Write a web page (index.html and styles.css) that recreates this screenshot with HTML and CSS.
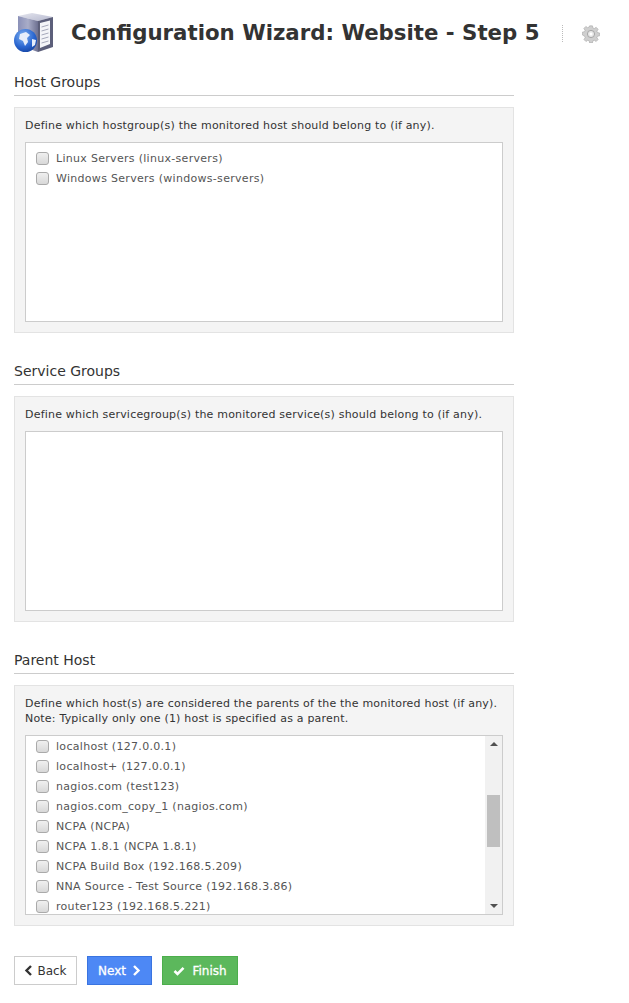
FILE: index.html
```html
<!DOCTYPE html>
<html lang="en">
<head>
<meta charset="utf-8">
<title>Configuration Wizard: Website - Step 5</title>
<link rel="stylesheet" href="styles.css">
</head>
<body>
<main class="page">
  <header class="head">
    <svg class="logo" width="40" height="41" viewBox="0 0 40 41" aria-hidden="true">
      <defs>
        <linearGradient id="srv" x1="0" y1="0" x2="1" y2="0"><stop offset="0" stop-color="#8a90b8"/><stop offset=".5" stop-color="#a9adc8"/><stop offset="1" stop-color="#6d7090"/></linearGradient>
        <linearGradient id="top" x1="0" y1="0" x2="1" y2="1"><stop offset="0" stop-color="#e4e5ee"/><stop offset="1" stop-color="#b6b9cf"/></linearGradient>
        <radialGradient id="glb" cx=".4" cy=".3" r=".8"><stop offset="0" stop-color="#7fb2f2"/><stop offset=".6" stop-color="#2a66d0"/><stop offset="1" stop-color="#123f9c"/></radialGradient>
      </defs>
      <path d="M4 3 L18 0 L39 4 L24 8Z" fill="url(#top)"/>
      <path d="M4 3 L24 8 V39 L4 32Z" fill="url(#srv)"/>
      <path d="M24 8 L39 4 V34 L24 39Z" fill="#5c5f7a"/>
      <path d="M26 10 L36 7.500 V31 L26 35Z" fill="#f4f5f8"/>
      <path d="M27.500 14 L34.500 12 M27.500 18 L34.500 16 M27.500 22 L34.500 20 M27.500 26 L34.500 24 M27.500 30 L34.500 28" stroke="#a5a8ba" stroke-width="1"/>
      <circle cx="11.500" cy="27.500" r="11.500" fill="url(#glb)"/>
      <path d="M6 21 L12 19 L16 22 L13 25 L14 29 L11 33 L9 28 L5 26Z M18 26 L22 27 L21 32 L18 34Z" fill="#e6eefb"/>
    </svg>
    <h1 class="title">Configuration Wizard: Website - Step 5</h1>
    <span class="divider"></span>
    <svg class="gear" width="18" height="18" viewBox="0 0 18 18" aria-hidden="true">
      <path d="M7.500 1h3l.4 2.200 1.500.6 1.900-1.300 2.100 2.100-1.300 1.900.6 1.500 2.200.4v3l-2.200.4-.6 1.500 1.300 1.900-2.100 2.100-1.900-1.300-1.500.6-.4 2.200h-3l-.4-2.200-1.500-.6-1.900 1.300-2.100-2.100 1.300-1.900-.6-1.500L0 10.500v-3l2.200-.4.6-1.500L1.500 3.700l2.100-2.100 1.900 1.300 1.500-.6z" fill="#cfcfcf" stroke="#a5a5a5" stroke-width=".6" transform="translate(.4 -.1) scale(.96)"/>
      <circle cx="9" cy="9" r="3.600" fill="#e6e6e6" stroke="#999" stroke-width=".8"/>
      <circle cx="9" cy="9" r="1.500" fill="#fff"/>
    </svg>
  </header>

  <section class="section">
    <h2 class="section-title">Host Groups</h2>
    <div class="well">
      <p class="desc">Define which hostgroup(s) the monitored host should belong to (if any).</p>
      <div class="list list-tall">
        <label class="row"><input type="checkbox" class="check">Linux Servers (linux-servers)</label>
        <label class="row"><input type="checkbox" class="check">Windows Servers (windows-servers)</label>
      </div>
    </div>
  </section>

  <section class="section">
    <h2 class="section-title">Service Groups</h2>
    <div class="well">
      <p class="desc">Define which servicegroup(s) the monitored service(s) should belong to (if any).</p>
      <div class="list list-tall"></div>
    </div>
  </section>

  <section class="section">
    <h2 class="section-title">Parent Host</h2>
    <div class="well">
      <p class="desc desc-two">Define which host(s) are considered the parents of the the monitored host (if any).<br>Note: Typically only one (1) host is specified as a parent.</p>
      <div class="list list-scroll">
        <div class="rows">
          <label class="row"><input type="checkbox" class="check">localhost (127.0.0.1)</label>
          <label class="row"><input type="checkbox" class="check">localhost+ (127.0.0.1)</label>
          <label class="row"><input type="checkbox" class="check">nagios.com (test123)</label>
          <label class="row"><input type="checkbox" class="check">nagios.com_copy_1 (nagios.com)</label>
          <label class="row"><input type="checkbox" class="check">NCPA (NCPA)</label>
          <label class="row"><input type="checkbox" class="check">NCPA 1.8.1 (NCPA 1.8.1)</label>
          <label class="row"><input type="checkbox" class="check">NCPA Build Box (192.168.5.209)</label>
          <label class="row"><input type="checkbox" class="check">NNA Source - Test Source (192.168.3.86)</label>
          <label class="row"><input type="checkbox" class="check">router123 (192.168.5.221)</label>
        </div>
        <div class="scrollbar">
          <span class="arrow-up"></span>
          <span class="thumb"></span>
          <span class="arrow-down"></span>
        </div>
      </div>
    </div>
  </section>

  <nav class="actions">
    <button class="btn btn-back" type="button">
      <svg width="9" height="11" viewBox="0 0 9 11" aria-hidden="true"><path d="M7 1 L2.500 5.500 L7 10" fill="none" stroke="currentColor" stroke-width="2.400"/></svg>Back</button>
    <button class="btn btn-next" type="button">Next<svg width="9" height="11" viewBox="0 0 9 11" aria-hidden="true"><path d="M2 1 L6.500 5.500 L2 10" fill="none" stroke="currentColor" stroke-width="2.400"/></svg></button>
    <button class="btn btn-finish" type="button"><svg width="12" height="10" viewBox="0 0 12 10" aria-hidden="true"><path d="M1.500 5 L4.500 8 L10.500 1.800" fill="none" stroke="currentColor" stroke-width="2.600"/></svg>Finish</button>
  </nav>
</main>
</body>
</html>
```
FILE: styles.css
```css
* { box-sizing: border-box; }
html, body { margin: 0; padding: 0; background: #fff; }
body {
  font-family: "DejaVu Sans", Verdana, sans-serif;
  font-size: 11px;
  color: #333;
}
.page { width: 629px; height: 1003px; padding: 0 0 0 14px; overflow: hidden; }

.head { display: flex; align-items: center; height: 64px; width: 600px; }
.logo { flex: none; margin: 3px 17px 0 0; }
.title { margin: 2px 0 0; font-size: 21.3px; font-weight: 700; line-height: 28px; color: #333; white-space: nowrap; }
.divider { flex: none; width: 0; height: 17px; border-left: 1px dotted #bbb; margin: 3px 19px 0 22px; }
.gear { flex: none; margin-top: 3px; }

.section { width: 500px; margin-bottom: 29px; }
.section-title {
  margin: 9px 0 11px;
  padding: 0 0 4px;
  font-size: 14px;
  font-weight: 400;
  line-height: 18px;
  height: 23px;
  color: #333;
  border-bottom: 1px solid #ccc;
}
.well { background: #f4f4f4; border: 1px solid #e3e3e3; padding: 10px; }
.desc { margin: 0 0 8px; font-size: 11px; line-height: 16px; color: #333; letter-spacing: .2px; }
.desc-two { line-height: 15px; margin-bottom: 9px; }

.list { background: #fff; border: 1px solid #ccc; }
.list-tall { height: 180px; padding-top: 5px; }
.list-scroll { height: 180px; display: flex; overflow: hidden; }
.rows { flex: 1; min-width: 0; }
.row { display: flex; align-items: center; height: 20px; padding-left: 10px; font-size: 11px; color: #555; letter-spacing: .3px; }
.check {
  appearance: none;
  flex: none;
  width: 13px;
  height: 13px;
  margin: 0 7px 0 0;
  background: linear-gradient(#f0f0f0, #d8d8d8);
  border: 1px solid #aaa;
  border-radius: 3px;
}

.scrollbar { flex: none; width: 17px; background: #f1f1f1; position: relative; }
.thumb { position: absolute; left: 2px; top: 59px; width: 13px; height: 52px; background: #bfbfbf; }
.arrow-up, .arrow-down { position: absolute; left: 5px; width: 0; height: 0; border-left: 4px solid transparent; border-right: 4px solid transparent; }
.arrow-up { top: 6px; border-bottom: 4px solid #505050; }
.arrow-down { bottom: 6px; border-top: 4px solid #505050; }

.actions { display: flex; gap: 10px; margin-top: 30px; }
.btn {
  display: inline-flex;
  align-items: center;
  justify-content: center;
  height: 29px;
  padding: 0;
  font-family: inherit;
  font-size: 12px;
  border-radius: 0;
  border: 1px solid;
}
.btn-back { width: 63px; gap: 4px; background: #fff; border-color: #ccc; color: #333; }
.btn-next { width: 65px; gap: 6px; background: #4d88f5; border-color: #3a74e0; color: #fff; -webkit-text-stroke: .3px #fff; }
.btn-finish { width: 76px; gap: 7px; background: #5cb85c; border-color: #4cae4c; color: #fff; font-weight: 400; -webkit-text-stroke: .3px #fff; }
```
